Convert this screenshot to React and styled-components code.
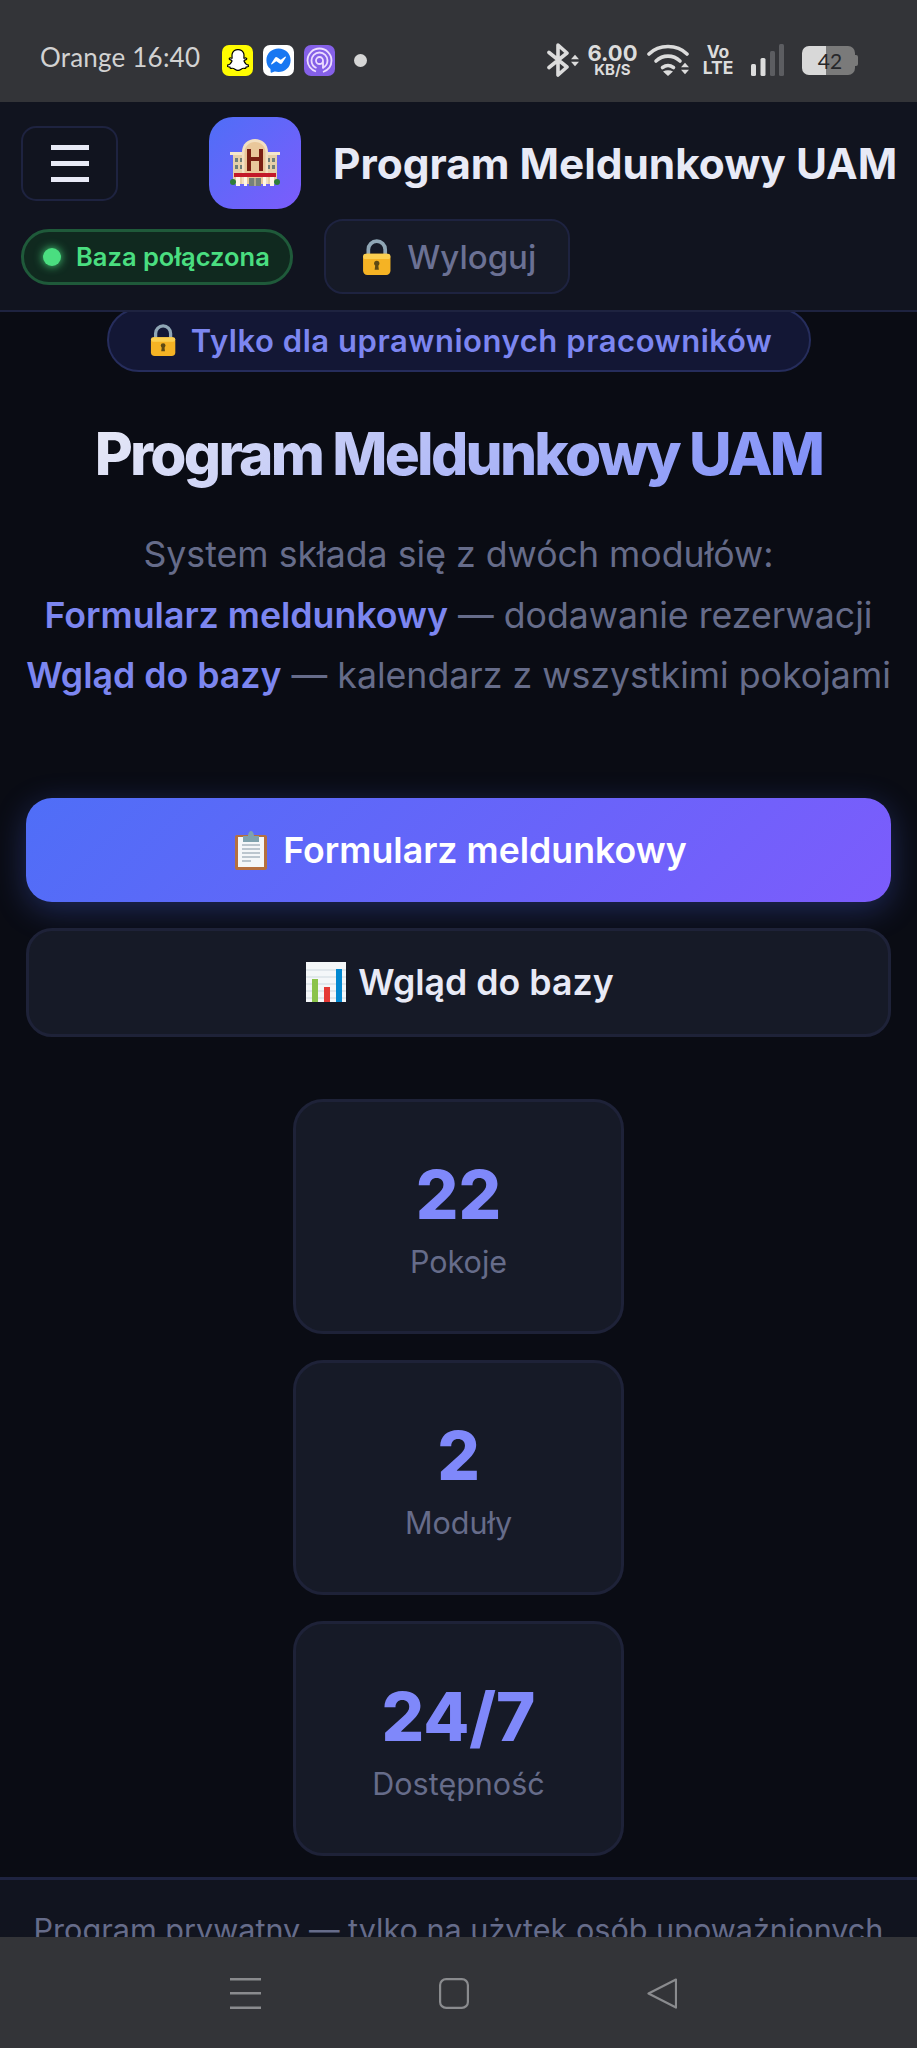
import React from 'react';
import styled, { createGlobalStyle } from 'styled-components';
import { FaSnapchatGhost, FaFacebookMessenger } from 'react-icons/fa';

const Global = createGlobalStyle`
  html, body { margin: 0; padding: 0; background: #0a0c14; }
  * { box-sizing: border-box; }
`;

const Frame = styled.div`
  width: 917px; height: 2048px; display: flex; flex-direction: column; overflow: hidden;
  font-family: Inter, "Liberation Sans", sans-serif;
`;

/* status bar */
const StatusBar = styled.div`
  height: 102px; flex: none; background: #333438; color: #dcdcdc;
  display: flex; align-items: center; justify-content: space-between;
  padding: 18px 62px 0 40px;
`;
const StatusGroup = styled.div`display: flex; align-items: center; gap: ${p => p.$gap ?? 10}px;`;
const Carrier = styled.span`
  font-family: Lato, sans-serif; font-size: 26px; letter-spacing: 0.2px; color: #d2d2d2;
  margin: 0 12px 6px 0; white-space: nowrap; width: 160px;
`;
const AppTile = styled.span`
  width: 31px; height: 31px; border-radius: 7px; background: ${p => p.$bg};
  display: flex; align-items: center; justify-content: center;
`;
const NotifDot = styled.span`width: 13px; height: 13px; border-radius: 50%; background: #d6d6d6; margin-left: 9px;`;
const Speed = styled.div`display: flex; flex-direction: column; align-items: center; width: 51px; color: #dcdcdc; margin: 0 9px 0 8px; line-height: 1;`;
const SpeedValue = styled.span`font-size: 22px; height: 18px; line-height: 18px; font-weight: 700;`;
const SpeedUnit = styled.span`font-size: 15px; line-height: 13px; margin-top: 1px; font-weight: 700;`;
const Vo = styled.div`display: flex; flex-direction: column; align-items: center; width: 28px; font-size: 17.5px; font-weight: 700; line-height: 16px; margin: 0 19px 0 15px;`;
const WifiArrows = styled.span`display: flex; margin: 16px 0 0 -8px;`;
const BtArrows = styled.span`display: flex; margin: 0 0 0 1px;`;
const Battery = styled.div`
  width: 53px; height: 29px; border-radius: 7px; position: relative; margin-left: 18px;
  background: linear-gradient(90deg, #d8d8d8 0 45%, #7a7a7a 45% 100%);
  color: #26272a; font-family: Lato, sans-serif; font-size: 21px; display: flex; align-items: center; justify-content: center;
  padding-left: 3px;
  &::after { content: ""; position: absolute; right: -3px; top: 9px; width: 3px; height: 11px; border-radius: 0 2px 2px 0; background: #7a7a7a; }
`;

/* header */
const Header = styled.header`
  height: 210px; flex: none; background: #11141f; border-bottom: 2px solid #1e2340;
  padding: 15px 21px 0; display: flex; flex-direction: column; position: relative; z-index: 1;
`;
const HeaderTop = styled.div`display: flex; align-items: center;`;
const MenuButton = styled.div`
  width: 97px; height: 75px; flex: none; border: 2px solid #1e2340; border-radius: 15px; background: transparent;
  display: flex; flex-direction: column; align-items: center; justify-content: center; gap: 11px; margin-right: 91px;
`;
const MenuLine = styled.span`width: 38px; height: 5px; background: #e8eaf6;`;
const Logo = styled.div`
  width: 92px; height: 92px; border-radius: 24px; background: linear-gradient(135deg, #4f6ef7, #7c5cfc);
  display: flex; align-items: center; justify-content: center; margin-right: 32px; flex: none;
`;
const HeaderTitle = styled.div`font-size: 42.4px; font-weight: 700; color: #e8eaf6; white-space: nowrap;`;
const HeaderBottom = styled.div`display: flex; align-items: center; gap: 31px; margin-top: 10px;`;
const DbBadge = styled.div`
  width: 272px; height: 56px; border-radius: 28px; background: #10291f; border: 3px solid #1f5a3a; color: #4ade80;
  display: flex; align-items: center; gap: 15px; padding-left: 19px; font-size: 25.5px; font-weight: 600; white-space: nowrap;
`;
const DbDot = styled.span`width: 18px; height: 18px; border-radius: 50%; background: #4ade80; box-shadow: 0 0 10px #4ade80; flex: none;`;
const LogoutButton = styled.div`
  width: 246px; height: 75px; border: 2px solid #1e2340; border-radius: 19px; background: #161a27; color: #6b7194;
  display: flex; align-items: center; justify-content: center; gap: 16px; padding-left: 4px; font-size: 33px; font-weight: 500;
`;

/* main */
const Main = styled.main`
  height: 1565px; flex: none; overflow: hidden; background: #0a0c14;
  display: flex; flex-direction: column; align-items: center;
`;
const AccessPill = styled.div`
  margin-top: -4px; width: 704px; height: 64px; border-radius: 32px; background: #131735; border: 2px solid #262d5c;
  color: #7c86f0; display: flex; align-items: center; justify-content: center; gap: 15px; padding-left: 5px;
  font-size: 31px; font-weight: 600; letter-spacing: 0.55px; white-space: nowrap;
`;
const Title = styled.h1`
  margin: 44px 0 0; font-size: 58.5px; line-height: 76px; font-weight: 800; letter-spacing: -2.75px; white-space: nowrap;
  background: linear-gradient(135deg, #e8eaf6 0%, #7c8cf8 100%);
  -webkit-background-clip: text; background-clip: text; color: transparent;
`;
const Lead = styled.p`
  margin: 32px 0 0; font-size: 35.7px; line-height: 60.5px; text-align: center; color: #666c8a; white-space: nowrap;
`;
const LeadStrong = styled.strong`color: #7c86f0; font-weight: 600;`;
const PrimaryButton = styled.div`
  margin-top: 92px; width: 865px; height: 104px; border-radius: 26px; background: linear-gradient(135deg, #4f6ef7, #7c5cfc);
  box-shadow: 0 8px 32px rgba(79, 110, 247, 0.3);
  color: #fff; display: flex; align-items: center; justify-content: center; gap: 14px; padding-left: 3px; font-size: 35.7px; font-weight: 600;
`;
const SecondaryButton = styled.div`
  margin-top: 26px; width: 865px; height: 109px; border-radius: 26px; background: #161a27; border: 3px solid #1e2238;
  color: #e8eaf6; display: flex; align-items: center; justify-content: center; gap: 12px; padding-left: 3px; font-size: 35.7px; font-weight: 600;
`;
const Stats = styled.div`margin-top: 62px; display: flex; flex-direction: column; gap: 26px;`;
const StatCard = styled.div`
  width: 331px; height: 235px; border-radius: 30px; background: #161a27; border: 3px solid #1e2238;
  display: flex; flex-direction: column; align-items: center; justify-content: center;
`;
const StatValue = styled.div`font-size: 67px; line-height: 80px; font-weight: 800; color: #7f88fa; margin-top: 7px;`;
const StatLabel = styled.div`font-size: 30.5px; line-height: 44px; color: #666c8a; margin-top: 5px;`;

/* footer & nav */
const Footer = styled.footer`
  height: 60px; flex: none; overflow: hidden; background: #11141f; border-top: 3px solid #1e2340;
  padding-top: 30px; text-align: center; color: #666c8a; font-size: 30.6px; line-height: 40px; white-space: nowrap;
`;
const NavBar = styled.nav`
  height: 111px; flex: none; background: #333438; display: flex; align-items: flex-start; justify-content: center;
  padding: 41px 10px 0 0; gap: 178px;
`;

const Bluetooth = () => (
  <svg width="23" height="34" viewBox="0 0 23 34" fill="none" stroke="#dcdcdc" strokeWidth="3.6" strokeLinejoin="round" strokeLinecap="round">
    <path d="M2 9.5 20 24 11 32V2l9 8L2 24.500" />
  </svg>
);
const UpDown = () => (
  <svg width="8" height="13" viewBox="0 0 9 13" fill="#dcdcdc"><path d="M4.500 0 9 5H0zM0 8h9l-4.500 5z" /></svg>
);
const Wifi = () => (
  <svg width="42" height="32" viewBox="0 0 42 32" fill="none" stroke="#dcdcdc" strokeWidth="3.6" strokeLinecap="round">
    <path d="M2 10C12 0 30 0 40 10" />
    <path d="M9 17c7-6.500 17-6.500 24 0" />
    <path d="M15.500 23.500c3.500-2.500 7.500-2.500 11 0" />
    <path d="M21 32l-5-4.500c3-1.800 7-1.800 10 0z" fill="#dcdcdc" stroke="none" />
  </svg>
);
const Signal = () => (
  <svg width="33" height="32" viewBox="0 0 33 32">
    <rect x="0" y="20" width="5" height="12" rx="1.500" fill="#dcdcdc" />
    <rect x="9.500" y="14" width="5" height="18" rx="1.500" fill="#dcdcdc" />
    <rect x="19" y="7" width="5" height="25" rx="1.500" fill="#5c5d61" />
    <rect x="28" y="0" width="5" height="32" rx="1.500" fill="#5c5d61" />
  </svg>
);
const FingerPrint = () => (
  <svg width="27" height="27" viewBox="0 0 27 27" fill="none" stroke="#ecdcff" strokeWidth="1.800">
    <path d="M17 25C22.500 23 25.500 18.500 25.500 13.500a12 12 0 0 0-24 0c0 5 3.500 9.500 8.500 11" />
    <path d="M16.500 21c3-1.500 5-4.500 5-7.500a8 8 0 0 0-16 0c0 3.500 2.300 6.300 5 7.500" />
    <path d="M17 13.500a3.500 3.500 0 1 0-7 0c0 2 1.600 3.500 3.500 3.500s3.500-1.500 3.500-3.500v8" />
  </svg>
);

const LockEmoji = ({ size = 30 }) => (
  <svg width={size * 0.82} height={size} viewBox="0 0 28 34">
    <path d="M6 16V10a8 8 0 0 1 16 0v6" fill="none" stroke="#8fa6b5" strokeWidth="3.500" />
    <rect x="1" y="14" width="26" height="20" rx="4" fill="#f5b324" />
    <rect x="1" y="14" width="26" height="5" rx="2.500" fill="#fbcf50" />
    <circle cx="14" cy="23" r="2.500" fill="#5f4a14" />
    <path d="M12.800 23h2.400l.8 6h-4z" fill="#5f4a14" />
  </svg>
);
const HotelEmoji = () => (
  <svg width="52" height="50" viewBox="0 0 52 50">
    <path d="M4 16h12v30H4zM36 16h12v30H36z" fill="#e6cfa8" />
    <path d="M1 14h15v3H1zM36 14h15v3H36z" fill="#f3e6cc" />
    <path d="M13 46V14C13 6 19 1 26 1s13 5 13 13v32z" fill="#f3e0c2" />
    <path d="M15.500 46V15C15.500 8 20 4 26 4s10.500 4 10.500 11v31z" fill="#e9c79a" />
    <path d="M18 11h4v8h8v-8h4v22h-4v-10h-8v10h-4z" fill="#7a1f12" />
    <path d="M6 20h3v4H6zM11 20h2v4h-2zM6 27h3v4H6zM11 27h2v4h-2zM39 20h2v4h-2zM43 20h3v4h-3zM39 27h2v4h-2zM43 27h3v4h-3z" fill="#6f7f7a" />
    <rect x="5" y="35" width="42" height="4" fill="#c3192a" />
    <path d="M7 39h4v9H7zM15 39h3v9h-3zM34 39h3v9h-3zM41 39h4v9h-4z" fill="#fff6e6" />
    <path d="M20 40h12v8H20z" fill="#76817a" />
    <path d="M25.500 40h1v8h-1z" fill="#e6cfa8" />
    <circle cx="4" cy="44" r="3" fill="#2e7d3a" /><circle cx="48" cy="44" r="3" fill="#2e7d3a" />
  </svg>
);
const ClipboardEmoji = () => (
  <svg width="36" height="40" viewBox="0 0 34 40">
    <rect x="1" y="5" width="32" height="35" rx="2" fill="#b5703f" />
    <rect x="4" y="7" width="26" height="30" fill="#f4f7f9" />
    <path d="M8 15h18M8 19h18M8 23h18M8 27h18M8 31h9" stroke="#a8b6c0" strokeWidth="1.400" />
    <path d="M9 12V6h5c0-3 1.500-5 3-5s3 2 3 5h5v6z" fill="#7fa2ad" />
  </svg>
);
const ChartEmoji = () => (
  <svg width="40" height="40" viewBox="0 0 40 40">
    <rect width="40" height="40" fill="#f4f7f9" />
    <path d="M0 8h40M0 15h40M0 22h40M0 29h40M0 36h40" stroke="#cdd8df" strokeWidth="1" />
    <rect x="6" y="17" width="6" height="23" fill="#8bc34a" />
    <rect x="18" y="25" width="6" height="15" fill="#e53935" />
    <rect x="30" y="7" width="6" height="33" fill="#0288d1" />
  </svg>
);

const NavMenu = () => (
  <svg width="31" height="31" viewBox="0 0 31 31" fill="#8a8b8e"><rect y="0" width="31" height="2.500" /><rect y="14" width="31" height="2.500" /><rect y="28.500" width="31" height="2.500" /></svg>
);
const NavHome = () => (
  <svg width="30" height="31" viewBox="0 0 30 31" fill="none" stroke="#8a8b8e" strokeWidth="2.200"><rect x="1.100" y="1.100" width="27.800" height="28.800" rx="6" /></svg>
);
const NavBack = () => (
  <svg width="30" height="31" viewBox="0 0 30 31" fill="none" stroke="#8a8b8e" strokeWidth="2.200" strokeLinejoin="round"><path d="M29 1.500 1.500 15.500 29 29.500z" /></svg>
);

const stats = [
  { value: '22', label: 'Pokoje' },
  { value: '2', label: 'Moduły' },
  { value: '24/7', label: 'Dostępność' },
];

export default function App() {
  return (
    <Frame>
      <Global />
      <StatusBar>
        <StatusGroup>
          <Carrier>Orange 16:40</Carrier>
          <AppTile $bg="#fffc00"><FaSnapchatGhost size={22} color="#fff" stroke="#000" strokeWidth={28} /></AppTile>
          <AppTile $bg="#fff"><FaFacebookMessenger size={25} color="#1877f2" /></AppTile>
          <AppTile $bg="#8560e8"><FingerPrint /></AppTile>
          <NotifDot />
        </StatusGroup>
        <StatusGroup $gap={0}>
          <Bluetooth />
          <BtArrows><UpDown /></BtArrows>
          <Speed><SpeedValue>6.00</SpeedValue><SpeedUnit>KB/S</SpeedUnit></Speed>
          <Wifi />
          <WifiArrows><UpDown /></WifiArrows>
          <Vo><span>Vo</span><span>LTE</span></Vo>
          <Signal />
          <Battery>42</Battery>
        </StatusGroup>
      </StatusBar>

      <Header>
        <HeaderTop>
          <MenuButton><MenuLine /><MenuLine /><MenuLine /></MenuButton>
          <Logo><HotelEmoji /></Logo>
          <HeaderTitle>Program Meldunkowy UAM</HeaderTitle>
        </HeaderTop>
        <HeaderBottom>
          <DbBadge><DbDot />Baza połączona</DbBadge>
          <LogoutButton><LockEmoji size={36} />Wyloguj</LogoutButton>
        </HeaderBottom>
      </Header>

      <Main>
        <AccessPill><LockEmoji size={32} />Tylko dla uprawnionych pracowników</AccessPill>
        <Title>Program Meldunkowy UAM</Title>
        <Lead>
          System składa się z dwóch modułów:<br />
          <LeadStrong>Formularz meldunkowy</LeadStrong> — dodawanie rezerwacji<br />
          <LeadStrong>Wgląd do bazy</LeadStrong> — kalendarz z wszystkimi pokojami
        </Lead>
        <PrimaryButton><ClipboardEmoji />Formularz meldunkowy</PrimaryButton>
        <SecondaryButton><ChartEmoji />Wgląd do bazy</SecondaryButton>
        <Stats>
          {stats.map(s => (
            <StatCard key={s.label}>
              <StatValue>{s.value}</StatValue>
              <StatLabel>{s.label}</StatLabel>
            </StatCard>
          ))}
        </Stats>
      </Main>

      <Footer>Program prywatny — tylko na użytek osób upoważnionych</Footer>
      <NavBar><NavMenu /><NavHome /><NavBack /></NavBar>
    </Frame>
  );
}
